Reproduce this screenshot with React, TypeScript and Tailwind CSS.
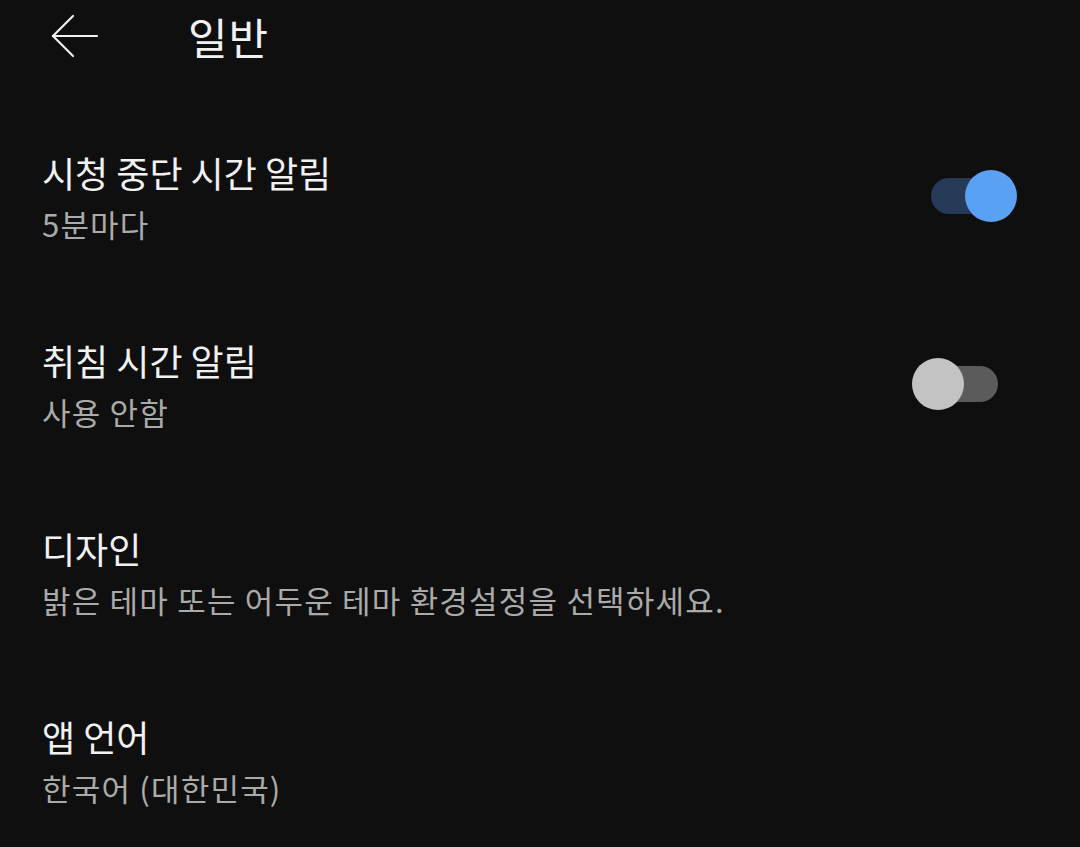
import React, { useState } from 'react';

interface SettingItem {
  id: string;
  title: string;
  subtitle: string;
  toggle?: boolean;
}

const items: SettingItem[] = [
  { id: 'break', title: '시청 중단 시간 알림', subtitle: '5분마다', toggle: true },
  { id: 'bedtime', title: '취침 시간 알림', subtitle: '사용 안함', toggle: false },
  { id: 'design', title: '디자인', subtitle: '밝은 테마 또는 어두운 테마 환경설정을 선택하세요.' },
  { id: 'lang', title: '앱 언어', subtitle: '한국어 (대한민국)' },
];

const Toggle = ({ on, onClick }: { on: boolean; onClick: () => void }) => (
  <button
    onClick={onClick}
    className={`relative w-[67px] h-[36px] rounded-full mr-[82px] shrink-0 ${on ? 'bg-[#263b58]' : 'bg-[#5b5b5b]'}`}
  >
    <span
      className={`absolute top-[-8px] w-[52px] h-[52px] rounded-full ${on ? 'left-[34px] bg-[#5aa1f3]' : 'left-[-19px] bg-[#c3c3c3]'}`}
    />
  </button>
);

const App = () => {
  const [toggles, setToggles] = useState<Record<string, boolean>>({ break: true, bedtime: false });

  return (
    <div
      className="w-[1080px] h-[847px] bg-[#0f0f0f] overflow-hidden text-[#f1f1f1]"
      style={{ fontFamily: '"Noto Sans CJK KR", "Noto Sans", sans-serif' }}
    >
      <div className="h-[72px] flex items-center">
        <button className="ml-[51px] w-[48px] h-[44px] flex items-center">
          <svg width="48" height="44" viewBox="0 0 48 44" fill="none" stroke="#f1f1f1" strokeWidth="2.2" strokeLinecap="round">
            <path d="M2 22 H46" />
            <path d="M2 22 L22 2" />
            <path d="M2 22 L22 42" />
          </svg>
        </button>
        <h1 className="ml-[89px] text-[43px] leading-[56px] font-normal tracking-[1px]">일반</h1>
      </div>

      <div className="pt-[30px]">
        {items.map((item) => (
          <div key={item.id} className="h-[188px] flex items-center">
            <div className="flex-1 pl-[42px]">
              <div className="text-[36px] leading-[48px] font-normal">{item.title}</div>
              <div className="mt-[8px] text-[31px] leading-[40px] tracking-[1.2px] text-[#aaaaaa]">{item.subtitle}</div>
            </div>
            {item.toggle !== undefined && (
              <Toggle
                on={toggles[item.id]}
                onClick={() => setToggles({ ...toggles, [item.id]: !toggles[item.id] })}
              />
            )}
          </div>
        ))}
      </div>
    </div>
  );
};

export default App;
